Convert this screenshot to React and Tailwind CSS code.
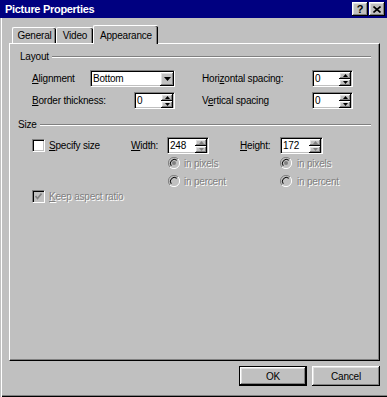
const raised =
  'shadow-[inset_-1px_-1px_0_#000,inset_1px_1px_0_#fff,inset_-2px_-2px_0_#808080,inset_2px_2px_0_#dfdfdf]';
const sunken =
  'border border-t-[#808080] border-l-[#808080] border-b-white border-r-white shadow-[inset_1px_1px_0_#000,inset_-1px_-1px_0_#c0c0c0]';
const dim = 'text-[#808080] [text-shadow:1px_1px_0_#fff]';

function Arrow({ up, disabled }) {
  return (
    <svg width="5" height="3" viewBox="0 0 5 3" className="block">
      <polygon
        points={up ? '2.5,0 5,3 0,3' : '0,0 5,0 2.5,3'}
        fill={disabled ? '#808080' : '#000'}
      />
    </svg>
  );
}

function Spin({ value, className, disabled }) {
  return (
    <div className={`flex h-[17px] items-center bg-white ${sunken} ${className}`}>
      <span className="flex-1 pl-[2px] leading-none">{value}</span>
      <div className="mr-[1px] flex flex-col">
        <div className={`flex h-[7px] w-[12px] items-center justify-center bg-[#c0c0c0] ${raised}`}>
          <Arrow up disabled={disabled} />
        </div>
        <div className={`flex h-[7px] w-[12px] items-center justify-center bg-[#c0c0c0] ${raised}`}>
          <Arrow disabled={disabled} />
        </div>
      </div>
    </div>
  );
}

function Check({ checked, disabled }) {
  return (
    <div
      className={`flex h-[13px] w-[13px] items-center justify-center ${sunken} ${
        disabled ? 'bg-[#c0c0c0]' : 'bg-white'
      }`}
    >
      {checked && (
        <svg width="7" height="7" viewBox="0 0 7 7">
          <polyline points="0.5,3 2.5,5.5 6.5,0.5" fill="none" stroke={disabled ? '#808080' : '#000'} strokeWidth="1.6" />
        </svg>
      )}
    </div>
  );
}

function Radio({ checked }) {
  return (
    <svg width="12" height="12" viewBox="0 0 12 12" className="block">
      <circle cx="6" cy="6" r="5.5" fill="#c0c0c0" />
      <path d="M10 2 A5.5 5.5 0 0 0 2 10" stroke="#808080" strokeWidth="1" fill="none" />
      <path d="M2 10 A5.5 5.5 0 0 0 10 2" stroke="#fff" strokeWidth="1" fill="none" />
      <path d="M8.8 3.2 A4 4 0 0 0 3.2 8.8" stroke="#000" strokeWidth="1" fill="none" />
      {checked && <circle cx="6" cy="6" r="2" fill="#808080" />}
    </svg>
  );
}

function Header({ label, line }) {
  return (
    <div className="flex h-[12px] items-center">
      <span className="leading-none">{label}</span>
      <div className={`mr-[8px] h-[2px] flex-1 border-t border-t-[#808080] border-b border-b-white ${line}`} />
    </div>
  );
}

export default function App() {
  return (
    <div
      className="flex h-[397px] w-[387px] flex-col bg-[#c0c0c0] text-[10px] tracking-[-0.2px] text-black shadow-[inset_1px_0_0_#c0c0c0,inset_2px_0_0_#fff,inset_0_-1px_0_#000,inset_0_-2px_0_#808080]"
      style={{ fontFamily: '"Liberation Sans", Arial, sans-serif' }}
    >
      {/* title bar */}
      <div className="flex h-[18px] items-center bg-[#000080] pl-[5px] pr-[2px]">
        <span className="flex-1 text-[11px] font-bold tracking-[-0.3px] text-white">Picture Properties</span>
        <div className={`flex h-[14px] w-[16px] items-center justify-center bg-[#c0c0c0] text-[11px] font-bold leading-none ${raised}`}>
          ?
        </div>
        <div className={`ml-[1px] flex h-[14px] w-[16px] items-center justify-center bg-[#c0c0c0] ${raised}`}>
          <svg width="8" height="7" viewBox="0 0 8 7">
            <path d="M0.5 0.5 L7.5 6.5 M7.5 0.5 L0.5 6.5" stroke="#000" strokeWidth="1.6" />
          </svg>
        </div>
      </div>

      {/* tabs */}
      <div className="mt-[7px] flex h-[18px] items-end pl-[12px]">
        <div className="flex h-[16px] w-[44px] items-center justify-center rounded-t-[2px] border-l border-t border-white shadow-[inset_-1px_0_0_#000,inset_-2px_0_0_#808080]">
          General
        </div>
        <div className="flex h-[16px] w-[37px] items-center justify-center rounded-t-[2px] border-l border-t border-white shadow-[inset_-1px_0_0_#000,inset_-2px_0_0_#808080]">
          Video
        </div>
        <div className="relative z-10 -mb-[1px] flex h-[19px] w-[65px] items-start justify-center rounded-t-[2px] border-l border-t border-white bg-[#c0c0c0] pt-[2px] shadow-[inset_-1px_0_0_#000,inset_-2px_0_0_#808080]">
          Appearance
        </div>
      </div>

      {/* panel */}
      <div className="ml-[9px] flex h-[318px] w-[371px] flex-col border border-t-white border-l-white border-r-black border-b-black shadow-[inset_-1px_-1px_0_#808080]">
        <div className="mt-[7px] pl-[10px]">
          <Header label="Layout" line="ml-[3px]" />
        </div>

        <div className="mt-[7px] flex h-[17px] items-center pl-[22px]">
          <span className="w-[58px]">
            <span className="underline">A</span>lignment
          </span>
          <div className={`flex h-[17px] w-[85px] items-center bg-white ${sunken}`}>
            <span className="flex-1 pl-[2px]">Bottom</span>
            <div className={`flex h-[14px] w-[14px] items-center justify-center bg-[#c0c0c0] ${raised}`}>
              <svg width="7" height="4" viewBox="0 0 7 4">
                <polygon points="0,0 7,0 3.5,4" fill="#000" />
              </svg>
            </div>
          </div>
          <span className="ml-[27px] w-[110px]">
            Hori<span className="underline">z</span>ontal spacing:
          </span>
          <Spin value="0" className="w-[41px]" />
        </div>

        <div className="mt-[5px] flex h-[17px] items-center pl-[22px]">
          <span className="w-[102px]">
            <span className="underline">B</span>order thickness:
          </span>
          <Spin value="0" className="w-[41px]" />
          <span className="ml-[27px] w-[110px]">
            V<span className="underline">e</span>rtical spacing
          </span>
          <Spin value="0" className="w-[41px]" />
        </div>

        <div className="mt-[10px] pl-[8px]">
          <Header label="Size" line="ml-[3px]" />
        </div>

        <div className="mt-[6px] flex h-[17px] items-center pl-[22px]">
          <div className="flex w-[99px] items-center gap-[4px]">
            <Check />
            <span>
              <span className="underline">S</span>pecify size
            </span>
          </div>
          <span className="w-[36px]">
            <span className="underline">W</span>idth:
          </span>
          <Spin value="248" className="w-[42px]" disabled />
          <span className="ml-[31px] w-[40px]">
            <span className="underline">H</span>eight:
          </span>
          <Spin value="172" className="w-[43px]" disabled />
        </div>

        <div className="mt-[3px] flex h-[12px] items-center">
          <div className="ml-[158px] flex w-[112px] items-center gap-[4px]">
            <Radio checked />
            <span className={dim}>in pixels</span>
          </div>
          <div className="flex items-center gap-[5px]">
            <Radio checked />
            <span className={dim}>in pixels</span>
          </div>
        </div>

        <div className="mt-[6px] flex h-[12px] items-center">
          <div className="ml-[158px] flex w-[112px] items-center gap-[4px]">
            <Radio />
            <span className={dim}>in percent</span>
          </div>
          <div className="flex items-center gap-[5px]">
            <Radio />
            <span className={dim}>in percent</span>
          </div>
        </div>

        <div className="mt-[3px] flex h-[13px] items-center gap-[4px] pl-[22px]">
          <Check checked disabled />
          <span className={dim}>
            <span className="underline">K</span>eep aspect ratio
          </span>
        </div>
      </div>

      {/* buttons */}
      <div className="mt-[5px] flex gap-[5px] pl-[239px]">
        <div className="h-[20px] w-[68px] border border-black">
          <div className={`flex h-full w-full items-center justify-center ${raised}`}>OK</div>
        </div>
        <div className={`flex h-[20px] w-[68px] items-center justify-center ${raised}`}>Cancel</div>
      </div>
    </div>
  );
}
